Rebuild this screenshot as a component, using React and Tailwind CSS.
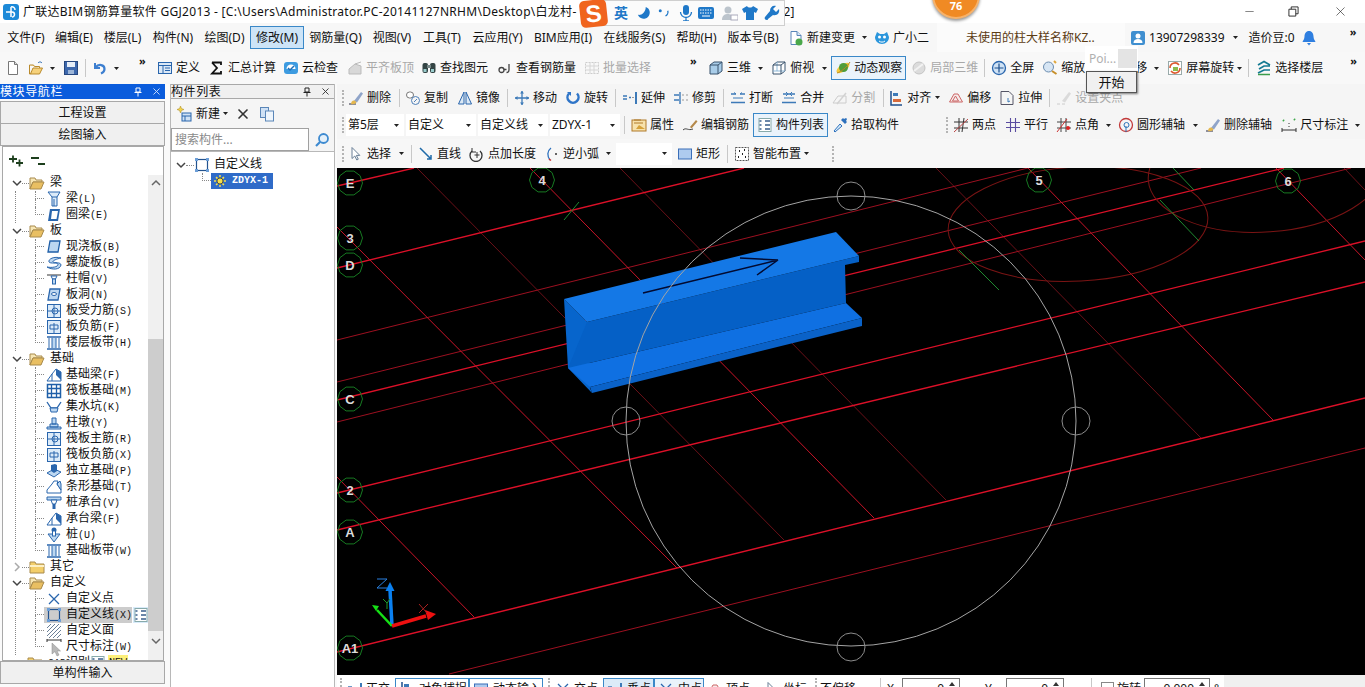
import React from "react";
import { Minus, X } from "lucide-react";

const B = "#2a66ad";
const L = "#bcd7f1";
const ic = {
  doc: <><path d="M3.5 1.5h6l3 3v10h-9z" fill="#fff" stroke="#777" /><path d="M9.5 1.5v3h3" fill="#ddd" stroke="#777" /></>,
  open: <><path d="M1.5 5V14h10l3-6H5L2.5 14" fill="#f6d27c" stroke="#b98a2c" /><path d="M1.5 5h4l1 1.5h5V8" fill="#f9e3a8" stroke="#b98a2c" /><path d="M10 3c1-1.5 3-1.5 4 0" fill="none" stroke="#3f78b8" /></>,
  save: <><rect x="1.5" y="1.5" width="13" height="13" fill="#3d68ad" stroke="#26477f" /><rect x="4" y="2" width="8" height="5" fill="#e6eef8" /><rect x="5" y="10" width="6" height="4" fill="#9db6d8" /></>,
  undo: <><path d="M3 3v5h5" fill="none" stroke="#3d7fd0" strokeWidth="2" /><path d="M3.5 7.5c3-4 9-3 9 1.5 0 2-1 3.5-3.5 4.5" fill="none" stroke="#3d7fd0" strokeWidth="2.2" /></>,
  define: <><rect x="1.5" y="2.5" width="13" height="11" fill="#dbe8f6" stroke={B} /><path d="M1.5 5.5h13M6 5.5v8M8 8h5M8 10.5h5" stroke={B} fill="none" /></>,
  sigma: <path d="M3 2.5h9V5M3 2.5l5 5.5-5 5.5h9V11" fill="none" stroke="#111" strokeWidth="1.8" />,
  cloud: <><rect x="1" y="2" width="14" height="12" rx="3" fill="#3d9be0" /><path d="M3.5 9a4.5 4.5 0 0 1 9 0" fill="#fff" /><path d="M5 8l2 2 4-4" fill="none" stroke="#1f6fb8" strokeWidth="1.5" /></>,
  flat: <><path d="M2 14V9l6-5 6 2v8z" fill="#d8d8d8" stroke="#bbb" /><path d="M8 4l6-2" stroke="#bbb" /></>,
  find: <><rect x="1.5" y="3" width="5.5" height="10" rx="2" fill="#344" /><rect x="9" y="3" width="5.5" height="10" rx="2" fill="#344" /><rect x="6" y="5" width="4" height="3" fill="#788" /><rect x="2.5" y="9" width="3" height="3" fill="#9cc" /><rect x="10" y="9" width="3" height="3" fill="#9cc" /></>,
  look: <><circle cx="4.5" cy="10" r="2.5" fill="none" stroke="#444" strokeWidth="1.3" /><path d="M7 9.5h2.5M12 4v6a2.5 2.5 0 0 1-2.5 2.5" fill="none" stroke="#444" strokeWidth="1.3" /></>,
  batch: <><rect x="1.5" y="2.5" width="13" height="11" fill="none" stroke="#ccc" strokeDasharray="2 1" /><path d="M1.5 6h13M1.5 10h13M6 2.5v11M10 2.5v11" stroke="#d6d6d6" /></>,
  cube: <><path d="M2 5l4-3h8v9l-4 3H2z" fill="#a9cde9" stroke="#39526c" /><path d="M2 5h8v9M10 5l4-3" fill="none" stroke="#39526c" /></>,
  topv: <><path d="M2 5l4-3h8v9l-4 3H2z" fill="#fff" stroke="#39526c" /><path d="M6 2v9H2M6 11h8" fill="none" stroke="#8fb9d9" /><path d="M2 5h8v9M10 5l4-3" fill="none" stroke="#39526c" /></>,
  orbit: <><ellipse cx="8" cy="8" rx="7.5" ry="3.5" transform="rotate(-35 8 8)" fill="#f3c83a" /><circle cx="8.5" cy="7.5" r="4.5" fill="#4f9d3a" /><path d="M2 13C6 12 12 7 15 2" stroke="#b88820" fill="none" /></>,
  local: <><circle cx="8" cy="8" r="6" fill="#dcdcdc" stroke="#c4c4c4" /><path d="M3 11l9-7" stroke="#f2f2f2" strokeWidth="2" /></>,
  full: <><circle cx="8" cy="8" r="6.5" fill="#cfe2f5" stroke={B} strokeWidth="1.3" /><path d="M8 3.5v9M3.5 8h9" stroke="#1c4f8d" strokeWidth="1.2" /></>,
  zoom: <><circle cx="6.5" cy="7" r="5" fill="#d6e5f4" stroke="#6c8db0" /><path d="M10 11l4.5 3" stroke="#c78f2a" strokeWidth="2" /><path d="M12 1l2 2" stroke="#e0a63c" strokeWidth="2" /></>,
  rotate: <><rect x="1.5" y="1.5" width="13" height="13" fill="#fff" stroke="#9aa" /><path d="M3 8a5 5 0 0 1 9-3" fill="none" stroke="#dd5a30" strokeWidth="1.6" /><path d="M13 8a5 5 0 0 1-9 3" fill="none" stroke="#dd5a30" strokeWidth="1.6" /><rect x="6" y="7" width="5" height="4" fill="#8cbb4c" /></>,
  floors: <><path d="M2 5l6-3.5L14 5M3 9l5-3h6M2 13l6-3h6" fill="none" stroke="#137a92" strokeWidth="1.7" /><path d="M2 14.5h12" stroke="#3b9c4b" strokeWidth="1.5" /></>,
  erase: <><path d="M1 14h7" stroke="#556" strokeWidth="1.3" /><path d="M6 11l7-9 2 1.5-6 9z" fill="#8fa4c9" /><path d="M3 14c0-2 1.5-4 3.5-3.5L8.5 12C8 14 5 14.5 3 14z" fill="#e4b74e" /></>,
  copy: <><rect x="1.5" y="2" width="7" height="6" rx="3" fill="#fff" stroke="#777" /><circle cx="10.5" cy="10.5" r="4" fill="none" stroke="#4d7fb8" /><path d="M9 12l3-3" stroke="#4d7fb8" /></>,
  mirror: <path d="M7 2v12H1.5zM9 2v12h5.5z" fill="#dce9f5" stroke={B} />,
  move: <><path d="M8 1v14M1 8h14" stroke="#3d7ab8" strokeWidth="1.3" /><path d="M8 1L6 3.5h4zM8 15l-2-2.5h4zM1 8l2.5-2v4zM15 8l-2.5-2v4z" fill="#3d7ab8" /></>,
  spin: <><path d="M4 3.5a5.5 5.5 0 1 0 8 0" fill="none" stroke="#2f75c8" strokeWidth="2.5" /><path d="M2 2h4v4z" fill="#2f75c8" /></>,
  extend: <><rect x="13" y="2" width="2" height="12" fill="#3d7ab8" /><path d="M1 6h4M1 9h4M7 7.5h2" stroke="#3d7ab8" strokeWidth="1.4" /><path d="M10 7.5h2" stroke="#999" /></>,
  trim: <><path d="M7 2v12M1 5h5M1 10h5" stroke="#3d7ab8" strokeWidth="1.4" fill="none" /><path d="M9 5h2M13 5h2M9 10h2M13 10h2" stroke="#999" /></>,
  brk: <><path d="M1 12.5h14M1 4h5M10 4h5" stroke="#3d7ab8" strokeWidth="1.3" /><path d="M6 4L4 2.5M10 4l2-1.5M3 8h10" stroke="#3d7ab8" /></>,
  merge: <><path d="M1 12.5h14M2 4h12" stroke="#3d7ab8" strokeWidth="1.3" /><path d="M5 2l2 2-2 2M11 2L9 4l2 2" fill="none" stroke="#3d7ab8" /><path d="M3 8h10" stroke="#3d7ab8" /></>,
  split: <><path d="M1 13l5-7h8v7z" fill="none" stroke="#ccc" /><path d="M5 14L14 3" stroke="#d2d2d2" strokeWidth="1.5" /></>,
  align: <><path d="M3 1v14h11" fill="none" stroke="#1f4f8c" strokeWidth="1.5" /><rect x="5" y="3" width="5" height="3" fill="#3d7ab8" /><rect x="5" y="9" width="8" height="3" fill="#d86a3a" /></>,
  offset: <><path d="M1.5 12L6 4h4l4.5 8z" fill="#f6eaea" stroke="#c66" /><path d="M4.5 11l3-5 3 5z" fill="none" stroke="#c66" /></>,
  stretch: <><path d="M2 1.5h8l4 4v9H2z" fill="none" stroke="#556" /><path d="M9 8v4M11 11l-2 1" stroke="#3d7ab8" /></>,
  setgrip: <><path d="M1 14h3M6 14h3" stroke="#ccc" /><path d="M6 11l7-9 2 1.5-6 9z" fill="#dadada" /></>,
  attr: <><rect x="1" y="3" width="14" height="11" fill="#f7e2ac" stroke="#b07b2a" /><path d="M3 6h9M3 3h7" stroke="#b07b2a" /><path d="M5 12l3-4 6 4" fill="#d5a13a" /></>,
  editbar: <><path d="M1 13c3-3 5 1 10-1" fill="none" stroke="#444" /><path d="M8 10l6-7 1.5 1.5-6 7z" fill="#b4884a" /></>,
  list: <><rect x="2" y="1.5" width="12" height="13" fill="#fff" stroke="#8aa" /><path d="M2.5 4h2M2.5 8h2M2.5 12h2M8 4h5M8 8h5M8 12h5" stroke="#3a5f8c" strokeWidth="1.3" /></>,
  pick: <><path d="M2 14l6-7 2 2-7 6z" fill="#d8ecfa" stroke="#2e71bd" /><path d="M9 3l4 4 2-2-1-1 1-2-1-1-2 1-1-1z" fill="#2e71bd" /></>,
  two: <><path d="M1 5h14M1 11h14M6 1v14M11 1L9 15" stroke="#333" /><path d="M1 15L15 2" stroke="#b44" /></>,
  para: <path d="M1 5.5h14M1 10.5h14M5.5 1v14M10.5 1v14" stroke="#5a4ca0" strokeWidth="1.1" />,
  angle: <><path d="M1 5h14M1 11h14M5 1v14M10 1v14" stroke="#444" /><path d="M1 15L11 2" stroke="#c33" /><circle cx="12" cy="11" r="2" fill="#d22" /></>,
  circ: <><circle cx="8" cy="8" r="6.5" fill="none" stroke="#c23b3b" strokeWidth="1.3" /><circle cx="8.5" cy="8" r="2.5" fill="none" stroke="#2c74b8" /><path d="M8 9v6" stroke="#2c74b8" /></>,
  dim: <><path d="M2 3l1 1M13 2l1 1" stroke="#3da84a" strokeWidth="2" /><path d="M1 13h14M1 11v4M15 11v4M8 6v1M8 9v1" stroke="#333" /></>,
  sel: <path d="M4 1.5v11L6.800 10l2 4 1.500-.8-2-3.800h3.500z" fill="#fff" stroke="#6a7f96" />,
  line: <path d="M2 2l11 11M9 13h4V9" fill="none" stroke="#1f6aa8" strokeWidth="1.5" />,
  pluslen: <><path d="M3 5a6 6 0 1 0 8 0" fill="none" stroke="#333" strokeWidth="1.3" /><path d="M3 2v4h4M8 6v6M5.5 9h5" fill="none" stroke="#333" /></>,
  arc: <><path d="M7 2C3 5 3 10 6 14" fill="none" stroke="#2e71bd" strokeWidth="1.3" /><path d="M5 13l2 1.5" stroke="#c33" strokeWidth="1.5" /><circle cx="12" cy="8" r="1" fill="#333" /></>,
  rect: <rect x="1.5" y="3" width="13" height="10" fill="#aecbef" stroke="#3a6eb8" />,
  smart: <><rect x="1.5" y="1.5" width="13" height="13" fill="#fff" stroke="#555" strokeDasharray="2 1" /><path d="M5 5h1M10 4h1M8 8h1M4 11h1M11 11h1" stroke="#222" strokeWidth="2" /></>,
  change: <><path d="M3 1.500h6l4 4v9H3z" fill="#fff" stroke="#5a86b8" /><path d="M9 1.500v4h4" fill="#d6e5f4" stroke="#5a86b8" /><circle cx="11" cy="12" r="3.500" fill="#4aa84a" /></>,
  face: <><path d="M1 7l2-5 3 2h4l3-2 2 5c0 4-3 7-7 7s-7-3-7-7z" fill="#2b96dc" /><circle cx="5.500" cy="7" r="1.500" fill="#fff" /><circle cx="10.500" cy="7" r="1.500" fill="#fff" /><path d="M5 11c2 1.500 4 1.500 6 0" stroke="#fff" fill="none" /></>,
  user: <><rect x="1" y="1" width="14" height="14" rx="2" fill="#3f8fd0" /><circle cx="8" cy="6" r="2.500" fill="#fff" /><path d="M3.500 13c0-3 2-4 4.500-4s4.500 1 4.500 4z" fill="#fff" /></>,
  bell: <><path d="M8 1c3 0 4.500 2.500 4.500 5.500 0 2.500 1.500 4 2 5.500h-13c.5-1.500 2-3 2-5.500C3.500 3.500 5 1 8 1z" fill="#2f7fe0" /><path d="M6 13h4l-2 2.500z" fill="#2f7fe0" /></>,
  add: <><path d="M4.500 0l1 2.500 2.500 1-2.500 1-1 2.500-1-2.500L1 3.500l2.500-1z" fill="#f2d24a" stroke="#a88a24" strokeWidth=".5" /><rect x="6" y="7" width="9" height="8" fill="#cfe1f5" stroke={B} /><path d="M6 10h9M9 10v5" stroke={B} /></>,
  dup: <><rect x="1.500" y="1.500" width="8" height="10" fill="#cfe1f5" stroke="#5a86b8" /><rect x="6.500" y="5" width="8" height="10" fill="#eef5fc" stroke="#5a86b8" /></>,
  custom: <><rect x="2.500" y="2.500" width="11" height="11" fill="none" stroke="#23538f" strokeWidth="1.2" /><path d="M1 1h3v3H1zM12 1h3v3h-3zM1 12h3v3H1zM12 12h3v3h-3z" fill="#6c9fd8" /></>,
  gear: <><path d="M7 0h2v3H7zM7 13h2v3H7zM0 7h3v2H0zM13 7h3v2h-3zM2 3.500L3.500 2l2 2L4 5.500zM12.500 2L14 3.500l-2 2L10.500 4zM2 12.500L3.500 14l2-2L4 10.500zM14 12.500L12.500 14l-2-2 1.500-1.500z" fill="#f6e04a" /><circle cx="8" cy="8" r="4" fill="#f6e04a" stroke="#333" /></>,
  beam: <><path d="M2 1h12l-3 5v9H6V6z" fill="#dcebf9" stroke={B} /><path d="M6 6h5M8 8v7" stroke={B} /></>,
  ring: <><path d="M4 2h10l-2 12H2z" fill="#2a66ad" /><path d="M6 4h6l-1.500 8H5z" fill="#fff" /></>,
  slab: <path d="M4 2h10l-2 11H2z" fill="#bcd7f1" stroke="#1f5fa8" strokeWidth="1.3" />,
  spiral: <path d="M15 3C8 1 2 4 3 7c1 2 9 0 9 2.500S6 13 1 12c5 3 13 3 14-2 0-3-7-2-8-3s3-3 8-4z" fill={L} stroke={B} />,
  cap: <><path d="M1 3h14v2H1z" fill="#999" /><path d="M5 5h6L9.500 8h-3z" fill="#fff" stroke={B} /><rect x="6.500" y="8" width="3" height="5" fill={L} stroke={B} /></>,
  hole: <><path d="M4 2h10l-2 11H2z" fill={L} stroke={B} strokeWidth="1.3" /><ellipse cx="8" cy="7" rx="2.500" ry="1.500" fill="#fff" stroke={B} /></>,
  force: <><rect x="1.500" y="1.500" width="13" height="13" fill="#dcebf9" stroke={B} /><path d="M8 1.500v13M1.500 8h13" stroke={B} /><circle cx="9" cy="8" r="3" fill="none" stroke={B} /></>,
  neg: <><rect x="1.500" y="1.500" width="13" height="13" fill="#dcebf9" stroke={B} /><path d="M8 4v10M4 6h8v4H4z" fill="none" stroke={B} /></>,
  band: <><path d="M6 3h4v10H6z" fill={L} /><path d="M1 2h14M1 14h14" stroke={B} strokeWidth="1.5" /><path d="M3 3v10M6 3v10M10 3v10M13 3v10" stroke={B} /></>,
  fbeam: <><path d="M1 14l5-7 4-5 5 3v9H1z" fill="#fff" stroke={B} /><path d="M10 2v6l5 5V5z" fill={B} /><path d="M6 7v7" stroke={B} /></>,
  raft: <><rect x="1.500" y="1.500" width="13" height="13" fill="#fff" stroke="#1f5fa8" strokeWidth="1.5" /><path d="M5.500 1.500v13M10.500 1.500v13M1.500 5.500h13M1.500 10.500h13" stroke="#1f5fa8" strokeWidth="1.3" /></>,
  sump: <><path d="M1 3l4 6h6l4-6" fill="none" stroke={B} strokeWidth="1.3" /><path d="M4 9l1 4h6l1-4z" fill={L} stroke={B} /></>,
  pier: <path d="M1 14h14v-2H1zM4 12V9h8v3zM6 9V3h4v6z" fill={L} stroke={B} />,
  isol: <><path d="M1 10l7-4 7 3-7 5z" fill={L} stroke={B} /><path d="M5 8V2l4-1 2 1v6l-3 2z" fill={B} /></>,
  strip: <><path d="M1 14v-3l5-6 2-3h4l-1 3 4 6v3z" fill="#fff" stroke={B} /><path d="M11 5l4 6V5l-1-3z" fill={L} stroke={B} /></>,
  pcap: <><path d="M1 2h14v3H1z" fill={L} stroke={B} /><path d="M5 5h6L9.500 9h-3z" fill="#fff" stroke={B} /><rect x="6.500" y="9" width="3" height="5" fill={B} /></>,
  pile: <><circle cx="8" cy="3" r="2.500" fill={B} /><path d="M2 7h12L8 15z" fill={L} stroke={B} /><rect x="6.500" y="4" width="3" height="5" fill="#fff" stroke={B} /></>,
  cpoint: <path d="M3 3l10 10M13 3L3 13" stroke="#2a66ad" strokeWidth="1.3" />,
  hatch: <path d="M1 5l4-4M1 9l8-8M1 13L13 1M3 15L15 3M7 15l8-8M11 15l4-4" stroke="#6a7f96" />,
  dimh: <path d="M1 1h14M1 0v3M15 0v3" stroke="#333" />,
};

function Ico({ n, className = "" }) {
  return (
    <svg viewBox="0 0 16 16" className={"w-4 h-4 shrink-0 " + className}>
      {ic[n]}
    </svg>
  );
}

function Tool({ n, label, className = "", gray }) {
  return (
    <div className={"flex items-center gap-[3px] shrink-0 " + className}>
      <Ico n={n} />
      <span className={gray ? "text-[#a8a8a8]" : "text-[#111]"}>{label}</span>
    </div>
  );
}

function Caret({ className = "" }) {
  return (
    <svg viewBox="0 0 5 3" className={"w-[5px] h-[3px] shrink-0 " + className}>
      <path d="M0 0h5L2.500 3z" fill="#222" />
    </svg>
  );
}

function Sep({ className = "" }) {
  return <span className={"w-px h-[18px] bg-[#c8c8c8] shrink-0 " + className} />;
}

function Grip({ className = "" }) {
  return <span className={"w-[2px] h-[16px] shrink-0 border-l-2 border-dotted border-[#b4b4b4] " + className} />;
}

function More({ className = "" }) {
  return <span className={"w-2 text-[11px] leading-none self-start mt-[3px] font-bold shrink-0 " + className}>»</span>;
}

function Combo({ label, className = "" }) {
  return (
    <div className={"h-[22px] bg-white flex items-center justify-between pl-[2px] pr-[5px] shrink-0 " + className}>
      <span>{label}</span>
      <Caret />
    </div>
  );
}

function Active({ n, label, className = "" }) {
  return (
    <div className={"h-[24px] w-[75px] border border-[#3a88c8] bg-[#eaf3fb] flex items-center gap-[3px] pl-[3px] shrink-0 " + className}>
      <Ico n={n} />
      <span>{label}</span>
    </div>
  );
}

// the tree font is a narrow song face, so its latin part is set smaller than the hanzi
function MonoText({ text }) {
  return text.split(/([\x20-\x7e]+)/).map((part, i) =>
    i % 2 ? <span key={i} className="text-[10px]">{part}</span> : part
  );
}

const menus = [
  ["文件(F)", "w-[48px]"], ["编辑(E)", "w-[48px]"], ["楼层(L)", "w-[49px]"], ["构件(N)", "w-[52px]"], ["绘图(D)", "w-[51px]"],
  ["修改(M)", "w-[54px] h-[23px] bg-[#cde4f7] border border-[#3a88c8]"], ["钢筋量(Q)", "w-[63px]"], ["视图(V)", "w-[50px]"], ["工具(T)", "w-[50px]"],
  ["云应用(Y)", "w-[61px]"], ["BIM应用(I)", "w-[70px]"], ["在线服务(S)", "w-[73px]"], ["帮助(H)", "w-[51px]"], ["版本号(B)", "w-[62px]"],
];

function MenuBar() {
  return (
    <div className="h-[29px] bg-[#f7f7f7] flex items-center pl-[2px] shrink-0">
      {menus.map(([t, w]) => (
        <div key={t} className={"flex items-center justify-center shrink-0 " + w}>{t}</div>
      ))}
      <Tool n="change" label="新建变更" className="ml-[4px]" />
      <Caret className="ml-[7px]" />
      <Tool n="face" label="广小二" className="ml-[7px]" />
      <div className="ml-[8px] w-[188px] h-[29px] bg-[#fbfbfb] flex items-center pl-[29px] text-[#5c3c14] shrink-0">未使用的柱大样名称KZ..</div>
      <Tool n="user" label="13907298339" className="ml-[5px]" />
      <Caret className="ml-[8px]" />
      <span className="ml-[11px] shrink-0">造价豆:0</span>
      <Ico n="bell" className="ml-[6px]" />
      <More className="ml-[33px]" />
    </div>
  );
}

function TopBar() {
  return (
    <div className="h-[32px] bg-[#f8f8f8] flex items-center shrink-0">
      <Ico n="doc" className="ml-[5px]" />
      <Ico n="open" className="ml-[7px]" />
      <Caret className="ml-[6px]" />
      <Ico n="save" className="ml-[8px]" />
      <Sep className="ml-[6px]" />
      <Ico n="undo" className="ml-[6px]" />
      <Caret className="ml-[6px]" />
      <More className="ml-[20px]" />
      <Tool n="define" label="定义" className="ml-[10px]" />
      <Tool n="sigma" label="汇总计算" className="ml-[9px]" />
      <Tool n="cloud" label="云检查" className="ml-[7px]" />
      <Tool n="flat" label="平齐板顶" gray className="ml-[9px]" />
      <Tool n="find" label="查找图元" className="ml-[7px]" />
      <Tool n="look" label="查看钢筋量" className="ml-[9px]" />
      <Tool n="batch" label="批量选择" gray className="ml-[8px]" />
      <More className="ml-[39px]" />
      <Tool n="cube" label="三维" className="ml-[10px]" />
      <Caret className="ml-[7px]" />
      <Tool n="topv" label="俯视" className="ml-[8px]" />
      <Caret className="ml-[8px]" />
      <Active n="orbit" label="动态观察" className="ml-[4px]" />
      <Tool n="local" label="局部三维" gray className="ml-[5px]" />
      <Sep className="ml-[6px]" />
      <Tool n="full" label="全屏" className="ml-[6px]" />
      <Tool n="zoom" label="缩放" className="ml-[8px]" />
      <Tool n="move" label="平移" className="ml-[19px]" />
      <Caret className="ml-[7px]" />
      <Tool n="rotate" label="屏幕旋转" className="ml-[8px]" />
      <Caret className="ml-[3px]" />
      <Sep className="ml-[6px]" />
      <Tool n="floors" label="选择楼层" className="ml-[7px]" />
      <More className="ml-[27px]" />
    </div>
  );
}

function Row2() {
  return (
    <div className="h-[27px] bg-[#f5f5f5] flex items-center shrink-0">
      <Grip className="ml-[5px]" />
      <Tool n="erase" label="删除" className="ml-[4px]" />
      <Sep className="ml-[8px]" />
      <Tool n="copy" label="复制" className="ml-[5px]" />
      <Tool n="mirror" label="镜像" className="ml-[9px]" />
      <Sep className="ml-[7px]" />
      <Tool n="move" label="移动" className="ml-[6px]" />
      <Tool n="spin" label="旋转" className="ml-[8px]" />
      <Sep className="ml-[7px]" />
      <Tool n="extend" label="延伸" className="ml-[6px]" />
      <Tool n="trim" label="修剪" className="ml-[8px]" />
      <Sep className="ml-[7px]" />
      <Tool n="brk" label="打断" className="ml-[6px]" />
      <Tool n="merge" label="合并" className="ml-[8px]" />
      <Tool n="split" label="分割" gray className="ml-[8px]" />
      <Sep className="ml-[8px]" />
      <Tool n="align" label="对齐" className="ml-[4px]" />
      <Caret className="ml-[4px]" />
      <Tool n="offset" label="偏移" className="ml-[8px]" />
      <Tool n="stretch" label="拉伸" className="ml-[8px]" />
      <Sep className="ml-[7px]" />
      <Tool n="setgrip" label="设置夹点" gray className="ml-[6px]" />
    </div>
  );
}

function Row3() {
  return (
    <div className="h-[28px] bg-[#f5f5f5] flex items-center shrink-0">
      <Grip className="ml-[5px]" />
      <Combo label="第5层" className="ml-[2px] w-[58px]" />
      <Combo label="自定义" className="ml-[2px] w-[70px]" />
      <Combo label="自定义线" className="ml-[2px] w-[70px]" />
      <Combo label="ZDYX-1" className="ml-[2px] w-[70px]" />
      <Sep className="ml-[4px]" />
      <Tool n="attr" label="属性" className="ml-[6px]" />
      <Tool n="editbar" label="编辑钢筋" className="ml-[8px]" />
      <Active n="list" label="构件列表" className="ml-[4px]" />
      <Tool n="pick" label="拾取构件" className="ml-[4px]" />
      <Grip className="ml-[47px]" />
      <Tool n="two" label="两点" className="ml-[5px]" />
      <Tool n="para" label="平行" className="ml-[9px]" />
      <Tool n="angle" label="点角" className="ml-[8px]" />
      <Caret className="ml-[7px]" />
      <Tool n="circ" label="圆形辅轴" className="ml-[7px]" />
      <Caret className="ml-[8px]" />
      <Tool n="erase" label="删除辅轴" className="ml-[7px]" />
      <Tool n="dim" label="尺寸标注" className="ml-[9px]" />
      <Caret className="ml-[7px]" />
    </div>
  );
}

function Row4() {
  return (
    <div className="h-[29px] bg-[#f7f7f7] flex items-center shrink-0">
      <Grip className="ml-[5px]" />
      <Tool n="sel" label="选择" className="ml-[4px]" />
      <Caret className="ml-[8px]" />
      <Sep className="ml-[7px]" />
      <Tool n="line" label="直线" className="ml-[6px]" />
      <Tool n="pluslen" label="点加长度" className="ml-[8px]" />
      <Tool n="arc" label="逆小弧" className="ml-[8px]" />
      <Caret className="ml-[7px]" />
      <Combo label="" className="ml-[5px] w-[56px]" />
      <Tool n="rect" label="矩形" className="ml-[5px]" />
      <Sep className="ml-[7px]" />
      <Tool n="smart" label="智能布置" className="ml-[6px]" />
      <Caret className="ml-[3px]" />
      <Grip className="ml-[23px]" />
    </div>
  );
}

const tree = [
  ["梁", [["梁(L)", "beam"], ["圈梁(E)", "ring"]]],
  ["板", [["现浇板(B)", "slab"], ["螺旋板(B)", "spiral"], ["柱帽(V)", "cap"], ["板洞(N)", "hole"], ["板受力筋(S)", "force"], ["板负筋(F)", "neg"], ["楼层板带(H)", "band"]]],
  ["基础", [["基础梁(F)", "fbeam"], ["筏板基础(M)", "raft"], ["集水坑(K)", "sump"], ["柱墩(Y)", "pier"], ["筏板主筋(R)", "force"], ["筏板负筋(X)", "neg"], ["独立基础(P)", "isol"], ["条形基础(T)", "strip"], ["桩承台(V)", "pcap"], ["承台梁(F)", "fbeam"], ["桩(U)", "pile"], ["基础板带(W)", "band"]]],
  ["其它", []],
  ["自定义", [["自定义点", "cpoint"], ["自定义线(X)", "custom"], ["自定义面", "hatch"], ["尺寸标注(W)", "dimh"]]],
];

function Folder({ open }) {
  return (
    <svg viewBox="0 0 16 14" className="w-4 h-[14px] shrink-0">
      {open ? (
        <>
          <path d="M1 2h5l1 2h6v2H4L1 13z" fill="#f7e6b4" stroke="#a88a4c" />
          <path d="M1 13l3-7h11l-3 7z" fill="#e9bf62" stroke="#a88a4c" />
        </>
      ) : (
        <>
          <path d="M1 2h5l1 2h8v9H1z" fill="#f3ce6a" stroke="#a88a4c" />
          <path d="M1 5h14v2H1z" fill="#fdf0c4" />
        </>
      )}
    </svg>
  );
}

function FolderRow({ label, open }) {
  return (
    <div className="h-4 flex items-center">
      <svg viewBox="0 0 10 10" className="w-[10px] h-[10px] ml-[9px] shrink-0">
        {open ? <path d="M1 3l4 4 4-4" fill="none" stroke="#444" strokeWidth="1.5" /> : <path d="M3 1l4 4-4 4" fill="none" stroke="#aaa" strokeWidth="1.5" />}
      </svg>
      <span className="w-[7px] border-b border-dotted border-[#888] shrink-0" />
      <Folder open={open} />
      <span className="ml-[5px]">{label}</span>
    </div>
  );
}

function LeafRow({ label, n, last }) {
  const on = label === "自定义线(X)";
  return (
    <div className="h-4 flex">
      <div className="w-[9px] flex flex-col shrink-0">
        <div className="h-1/2 border-l border-b border-dotted border-[#888]" />
        <div className={last ? "" : "h-1/2 border-l border-dotted border-[#888]"} />
      </div>
      <div className={"flex items-center h-4 pl-[2px] " + (on ? "bg-[#cccccc] w-[88px]" : "")}>
        <Ico n={n} />
        <span className="ml-[4px] whitespace-nowrap"><MonoText text={label} /></span>
      </div>
      {on && <Ico n="list" className="ml-[1px] bg-[#d8ebfa]" />}
    </div>
  );
}

function ModulePanel() {
  return (
    <div className="w-[165px] shrink-0 flex flex-col h-full">
      <div className="h-[15px] bg-[#0a5cdc] text-white flex items-center justify-between pr-[3px] text-[12px] tracking-[.6px] shrink-0">
        <span>模块导航栏</span>
        <span className="flex items-center gap-[8px]">
          <svg viewBox="0 0 10 10" className="w-[10px] h-[10px]"><path d="M3 1h4v4H3zM1.500 5.500h7M5 5.500v4" fill="none" stroke="#fff" /></svg>
          <X size={11} color="#cfe0ff" />
        </span>
      </div>
      <div className="h-[23px] mt-[2px] bg-[#f0f0f0] border border-[#a8a8a8] flex items-center justify-center shrink-0">工程设置</div>
      <div className="h-[22px] bg-[#f0f0f0] border-x border-b border-[#a8a8a8] flex items-center justify-center shrink-0">绘图输入</div>
      <div className="h-[515px] ml-[2px] mr-[1px] bg-white border border-[#a8a8a8] flex shrink-0 overflow-hidden font-['Liberation_Mono','Noto_Sans_CJK_SC',monospace]">
        <div className="flex-1 min-w-0 overflow-hidden">
          <div className="h-[28px] flex items-center pl-[5px] gap-[6px]">
            <svg viewBox="0 0 16 12" className="w-4 h-3"><path d="M1 4h8M5 .5v7M8 8h7M11.500 4.500v7" stroke="#1d3f1d" strokeWidth="1.8" /></svg>
            <svg viewBox="0 0 16 12" className="w-4 h-3"><path d="M1 3h8M8 9h7" stroke="#1d3f1d" strokeWidth="1.8" /></svg>
          </div>
          {tree.map(([label, kids]) => (
            <div key={label}>
              <FolderRow label={label} open={kids.length > 0} />
              {kids.length > 0 && (
                <div className="ml-[12px] pl-[19px] border-l border-dotted border-[#888]">
                  {kids.map(([t, n], i) => <LeafRow key={t} label={t} n={n} last={i === kids.length - 1} />)}
                </div>
              )}
            </div>
          ))}
          <div className="h-4 flex items-center ml-[24px]">
            <Folder />
            <span className="ml-[5px] w-[42px] whitespace-nowrap"><MonoText text="CAD识别" /></span>
            <Ico n="list" />
            <span className="ml-[2px] bg-[#fdf07a] text-[10px] leading-4 px-px">NEW</span>
          </div>
        </div>
        <div className="w-[15px] mt-[28px] bg-[#f0f0f0] flex flex-col items-center shrink-0">
          <svg viewBox="0 0 10 16" className="w-[10px] h-4 shrink-0"><path d="M1 10l4-4 4 4" fill="none" stroke="#666" strokeWidth="1.5" /></svg>
          <div className="w-[15px] h-[292px] mt-[148px] bg-[#cdcdcd] shrink-0" />
          <svg viewBox="0 0 10 16" className="w-[10px] h-4 mt-[2px] shrink-0"><path d="M1 6l4 4 4-4" fill="none" stroke="#666" strokeWidth="1.5" /></svg>
        </div>
      </div>
      <div className="h-[23px] bg-[#f0f0f0] border border-[#a8a8a8] flex items-center justify-center shrink-0">单构件输入</div>
    </div>
  );
}

function ListPanel() {
  return (
    <div className="w-[165px] ml-[5px] shrink-0 flex flex-col h-full border-x border-[#b8b8b8] bg-white">
      <div className="h-[15px] bg-[#f0f0f0] border-y border-[#a8a8a8] flex items-center justify-between pr-[3px] text-[12px] tracking-[.6px] shrink-0">
        <span>构件列表</span>
        <span className="flex items-center gap-[8px]">
          <svg viewBox="0 0 10 10" className="w-[10px] h-[10px]"><path d="M3 1h4v4H3zM1.500 5.500h7M5 5.500v4" fill="none" stroke="#222" /></svg>
          <X size={11} color="#333" />
        </span>
      </div>
      <div className="h-[29px] bg-[#f5f5f5] flex items-center pl-[5px] shrink-0">
        <Ico n="add" />
        <span className="ml-[4px]">新建</span>
        <Caret className="ml-[3px]" />
        <X size={16} className="ml-[7px]" color="#333" strokeWidth={2.5} />
        <Ico n="dup" className="ml-[8px]" />
      </div>
      <div className="h-[23px] bg-[#f5f5f5] flex shrink-0">
        <div className="w-[138px] bg-white border border-[#a0a0a0] text-[#8a8a8a] flex items-center pl-[3px] shrink-0">搜索构件...</div>
        <div className="flex-1 flex items-center justify-center">
          <svg viewBox="0 0 16 16" className="w-4 h-4"><circle cx="9.500" cy="6.500" r="4.500" fill="#e4f0fa" stroke="#3d8ad0" strokeWidth="1.8" /><path d="M6 10l-4 4" stroke="#3d8ad0" strokeWidth="2.2" /></svg>
        </div>
      </div>
      <div className="border-t border-[#b8b8b8] pt-[5px] flex-1 font-['Liberation_Mono','Noto_Sans_CJK_SC',monospace]">
        <div className="h-4 flex items-center">
          <svg viewBox="0 0 10 10" className="w-[10px] h-[10px] ml-[5px] shrink-0"><path d="M1 3l4 4 4-4" fill="none" stroke="#444" strokeWidth="1.5" /></svg>
          <span className="w-[8px] border-b border-dotted border-[#888] shrink-0" />
          <Ico n="custom" />
          <span className="ml-[4px]">自定义线</span>
        </div>
        <div className="h-4 flex items-center ml-[31px]">
          <span className="w-[9px] h-4 flex flex-col shrink-0"><span className="h-1/2 border-l border-b border-dotted border-[#888]" /></span>
          <div className="w-[62px] h-4 bg-[#2f6bc8] text-white flex items-center pl-[3px]">
            <svg viewBox="0 0 16 16" className="w-3 h-3 shrink-0">{ic.gear}</svg>
            <span className="ml-[6px] text-[10px] font-bold whitespace-nowrap">ZDYX-1</span>
          </div>
        </div>
      </div>
    </div>
  );
}

const bright = [
  [337, 186, 414, 168], [337, 268, 744, 168], [337, 400, 1284, 168], [337, 493, 1365, 241], [337, 530, 1365, 282], [337, 652, 1365, 398],
];
const mid = [
  [337, 227, 677, 568], [337, 477, 474, 617], [530, 168, 874, 518], [1028, 168, 1273, 420], [1276, 168, 1365, 260],
];
const dim = [
  [337, 340, 1028, 168], [337, 382, 1201, 168], [337, 422, 1351, 168], [449, 674, 1365, 448],
];
const faint = [
  [417, 168, 784, 540], [620, 168, 946, 500], [936, 168, 1201, 438], [1344, 168, 1365, 190],
];
const axes = [
  ["E", 350, 183], ["4", 542, 180], ["3", 350, 238], ["D", 350, 265], ["C", 350, 399], ["2", 350, 490], ["A", 350, 532], ["A1", 350, 648], ["5", 1039, 180], ["6", 1288, 181],
];

function octa(cx, cy, r) {
  const pts = [];
  for (let i = 0; i < 10; i++) {
    const a = (i / 10) * Math.PI * 2;
    pts.push((cx + r * Math.cos(a)).toFixed(1) + "," + (cy + r * Math.sin(a)).toFixed(1));
  }
  return pts.join(" ");
}

function Lines({ list, color, w }) {
  return list.map((l) => <line key={l.join()} x1={l[0]} y1={l[1]} x2={l[2]} y2={l[3]} stroke={color} strokeWidth={w} />);
}

function Canvas() {
  return (
    <div className="flex-1 min-h-0 bg-black overflow-hidden">
      <svg viewBox="337 168 1028 507" className="w-full h-full block">
        <Lines list={faint} color="#6a1018" w={1} />
        <Lines list={dim} color="#9c1020" w={1} />
        <Lines list={mid} color="#c81428" w={1} />
        <Lines list={bright} color="#dc1028" w={1.3} />
        <ellipse cx="1078" cy="224" rx="130" ry="57" transform="rotate(-3 1078 224)" fill="none" stroke="#7a1414" />
        <ellipse cx="1266" cy="172" rx="118" ry="60" transform="rotate(-4 1266 172)" fill="none" stroke="#7a1414" />
        <path d="M564 220L579 202M959 250L999 290M1160 200L1199 241M1173 168L1194 190" stroke="#1f8a30" strokeWidth="1" />
        <polygon points="564,299 587,322 590,388 592,393 568,368" fill="#0765cc" />
        <polygon points="587,322 859,256 859,262 845,265 846,303 568,368" fill="#0560c6" />
        <polygon points="564,299 836,232 859,256 587,322" fill="#1478e6" />
        <polygon points="568,368 846,303 862,318 590,387" fill="#0f70e2" />
        <polygon points="590,387 862,318 862,326 592,393" fill="#0a62c8" />
        <path d="M643 293L778 260L740 258M778 260L757 275" fill="none" stroke="#020a30" strokeWidth="1.5" />
        <circle cx="851" cy="421" r="225" fill="none" stroke="#a4a4a4" />
        {[[851, 196], [851, 647], [626, 421], [1076, 421]].map(([x, y]) => (
          <circle key={x + "-" + y} cx={x} cy={y} r="14" fill="none" stroke="#8c8c8c" />
        ))}
        {axes.map(([t, x, y]) => (
          <g key={t}>
            <polygon points={octa(x, y, 12.5)} fill="none" stroke="#177a22" />
            <text x={x} y={y + 5} textAnchor="middle" fontFamily="Liberation Sans" fontWeight="700" fontSize="13" fill="#dcdcdc">{t}</text>
          </g>
        ))}
        <path d="M392 626L390 590" stroke="#0a80f0" strokeWidth="3.5" />
        <path d="M390 582l-4.500 9h9z" fill="#0a80f0" />
        <path d="M392 626L377 610" stroke="#16e016" strokeWidth="2.5" />
        <path d="M372 605l7 1-3 5z" fill="#16e016" />
        <path d="M392 626L426 616" stroke="#ee1010" strokeWidth="3.5" />
        <path d="M436 614l-11-4 3 10z" fill="#ee1010" />
        <path d="M377 579h10l-10 9h10" fill="none" stroke="#2a80e0" />
        <path d="M383 599l4 4 3-4M387 603v6" fill="none" stroke="#1f9a2a" />
        <path d="M419 604l8 9M428 604l-9 9" stroke="#a82020" />
      </svg>
    </div>
  );
}

function StripBox({ label, n, className = "" }) {
  return (
    <div className={"h-[22px] border border-[#3a88c8] flex items-center gap-[4px] pl-[3px] shrink-0 " + className}>
      <Ico n={n} />
      <span>{label}</span>
    </div>
  );
}

function Spin({ value, className = "" }) {
  return (
    <div className={"h-[22px] border border-[#777] bg-white flex items-center justify-end gap-[5px] pr-[4px] shrink-0 " + className}>
      <span>{value}</span>
      <span className="w-0 h-0 self-start mt-[3px] border-x-[3px] border-x-transparent border-b-[4px] border-b-[#333]" />
    </div>
  );
}

function StatusStrip() {
  return (
    <div className="h-[12px] bg-[#f0f0f0] overflow-hidden shrink-0">
      <div className="w-[887px] h-[26px] bg-white flex items-start pt-[3px]">
        <Grip className="ml-[3px]" />
        <Tool n="extend" label="正交" className="ml-[5px] h-[22px]" />
        <StripBox n="align" label="对象捕捉" className="ml-[5px] w-[74px]" />
        <StripBox n="rect" label="动态输入" className="w-[74px]" />
        <Grip className="ml-[5px]" />
        <Tool n="cpoint" label="交点" className="ml-[5px] h-[22px]" />
        <StripBox n="extend" label="垂点" className="ml-[5px] w-[51px] bg-[#dcebf8]" />
        <StripBox n="cpoint" label="中点" className="w-[50px] bg-[#eaf3fb]" />
        <Tool n="offset" label="顶点" className="ml-[3px] h-[22px]" />
        <Tool n="sel" label="坐标" className="ml-[14px] h-[22px]" />
        <Grip className="ml-[8px]" />
        <span className="ml-[3px] leading-[22px]">不偏移</span>
        <Sep className="ml-[24px]" />
        <span className="ml-[6px] leading-[22px] w-[15px]">X</span>
        <Spin value="0" className="w-[58px]" />
        <span className="ml-[25px] leading-[22px] w-[21px]">Y</span>
        <Spin value="0" className="w-[58px]" />
        <Sep className="ml-[27px]" />
        <span className="ml-[9px] w-[13px] h-[13px] border border-[#888] mt-[4px] shrink-0" />
        <span className="ml-[3px] leading-[22px]">旋转</span>
        <Spin value="0.000" className="w-[66px] ml-[3px]" />
        <span className="ml-[4px] leading-[22px]">°</span>
      </div>
    </div>
  );
}

function SogouBar() {
  return (
    <div className="absolute left-[580px] top-0 flex h-[27px] z-20">
      <div className="w-[27px] h-[27px] bg-[#f0641e] rounded-[5px] -rotate-6 flex items-center justify-center text-white font-black text-[24px] leading-none font-['Liberation_Sans',sans-serif] z-10">S</div>
      <div className="-ml-[7px] w-[185px] h-[26px] bg-[#fbfbfb] border border-[#cfcfcf] flex items-center pl-[13px] shrink-0">
        <span className="text-[#1f78c8] font-bold text-[14px] leading-none">英</span>
        <svg viewBox="0 0 16 16" className="w-[14px] h-[14px] ml-[9px]"><path d="M10 1a7 7 0 1 1-9 9c4 1 9-3 9-9z" fill="#1f78c8" /></svg>
        <svg viewBox="0 0 16 16" className="w-3 h-3 ml-[7px]"><circle cx="3" cy="5" r="2" fill="#1f78c8" /><path d="M13 5c1 3-1 6-3 7" fill="none" stroke="#1f78c8" strokeWidth="1.8" /></svg>
        <svg viewBox="0 0 16 16" className="w-4 h-4 ml-[8px]"><rect x="5" y="0" width="6" height="10" rx="3" fill="#1f78c8" /><path d="M2.500 7a5.500 5.500 0 0 0 11 0M8 12.500V16M5 16h6" fill="none" stroke="#1f78c8" strokeWidth="1.3" /></svg>
        <svg viewBox="0 0 16 12" className="w-4 h-3 ml-[4px]"><rect x="0" y="0" width="16" height="12" rx="2" fill="#1f78c8" /><path d="M2 3h12M2 6h12" stroke="#fff" strokeDasharray="1.5 1" /><path d="M4 9h8" stroke="#fff" /></svg>
        <svg viewBox="0 0 16 16" className="w-4 h-4 ml-[8px]"><circle cx="6" cy="5" r="3.500" fill="#bcc4cc" /><path d="M0 15c0-5 3-6 6-6 1 0 2 0 3 1v5z" fill="#bcc4cc" /><rect x="9" y="10" width="7" height="5" fill="#fff" stroke="#aab" /></svg>
        <svg viewBox="0 0 16 16" className="w-4 h-4 ml-[4px]"><path d="M5 1L0 4l2 4 2-1v8h8V7l2 1 2-4-5-3c-1 2-5 2-6 0z" fill="#1f78c8" /></svg>
        <svg viewBox="0 0 16 16" className="w-4 h-4 ml-[6px]"><path d="M15 4l-3 3-3-3 3-3c-3-1-6 1-6 5L1 12c-1 1 0 3 2 3 0 0 1 0 1-1l5-4c4 1 7-2 6-6z" fill="#1f78c8" /></svg>
      </div>
    </div>
  );
}

function TitleBar() {
  return (
    <div className="h-[23px] bg-white flex items-center pl-[3px] shrink-0">
      <svg viewBox="0 0 16 16" className="w-4 h-4 shrink-0"><rect width="16" height="16" rx="3" fill="#1d8ad8" /><path d="M8 3v10M3 8h6a2.500 2.500 0 0 1 0 5M8 3a3 3 0 0 1 4 3" fill="none" stroke="#fff" strokeWidth="1.5" /></svg>
      <span className="ml-[4px] whitespace-nowrap shrink-0 tracking-[.28px]">广联达BIM钢筋算量软件 GGJ2013 - [C:\Users\Administrator.PC-20141127NRHM\Desktop\白龙村-</span>
      <span className="ml-[207px] shrink-0">2]</span>
      <div className="ml-auto flex items-center text-[#222]">
        <Minus size={13} strokeWidth={1} className="mr-[32px]" />
        <svg viewBox="0 0 12 12" className="w-[11px] h-[11px] mr-[34px]"><path d="M1 3.500h7.500V11H1zM3.500 3.500V1H11v7.500H8.500" fill="none" stroke="#222" /></svg>
        <X size={15} strokeWidth={1} className="mr-[17px]" />
      </div>
    </div>
  );
}

export default function App() {
  return (
    <div className="relative w-[1365px] h-[687px] overflow-hidden bg-[#fafafa] flex flex-col text-[12px] leading-none text-[#111] font-['Noto_Sans','Noto_Sans_CJK_SC',sans-serif]">
      <TitleBar />
      <MenuBar />
      <TopBar />
      <div className="flex flex-1 min-h-0">
        <ModulePanel />
        <ListPanel />
        <div className="w-[1028px] ml-[2px] flex flex-col h-full shrink-0">
          <Row2 />
          <Row3 />
          <Row4 />
          <Canvas />
          <StatusStrip />
        </div>
      </div>

      <SogouBar />
      <div className="absolute left-[932px] -top-[29px] w-[48px] h-[48px] rounded-full bg-[#f08a24] border-2 border-[#f6b26b] shadow-[0_2px_3px_rgba(0,0,0,.4)] flex items-end justify-center pb-[6px] text-white font-bold text-[11px] z-20">76</div>
      <svg viewBox="0 0 10 14" className="absolute left-[51px] top-[643px] w-[10px] h-[14px]"><path d="M1 0v11l3-2.500 2 4.500 2-1-2-4h3.500z" fill="#b8b8b8" stroke="#888" strokeWidth=".5" /></svg>
      <div className="absolute left-[1085px] top-[46px] w-[53px] z-20">
        <div className="h-[25px] bg-white flex items-center justify-between pl-[4px] pr-px text-[#b0b0b0]">
          <span>Poi...</span>
          <span className="w-[19px] h-[19px] bg-[#e4e4e4]" />
        </div>
        <div className="h-[22px] mx-[1px] bg-[#f0f0f0] border border-[#555] shadow-[1px_1px_2px_rgba(0,0,0,.5)] flex items-center justify-center text-[13px]">开始</div>
      </div>
    </div>
  );
}
